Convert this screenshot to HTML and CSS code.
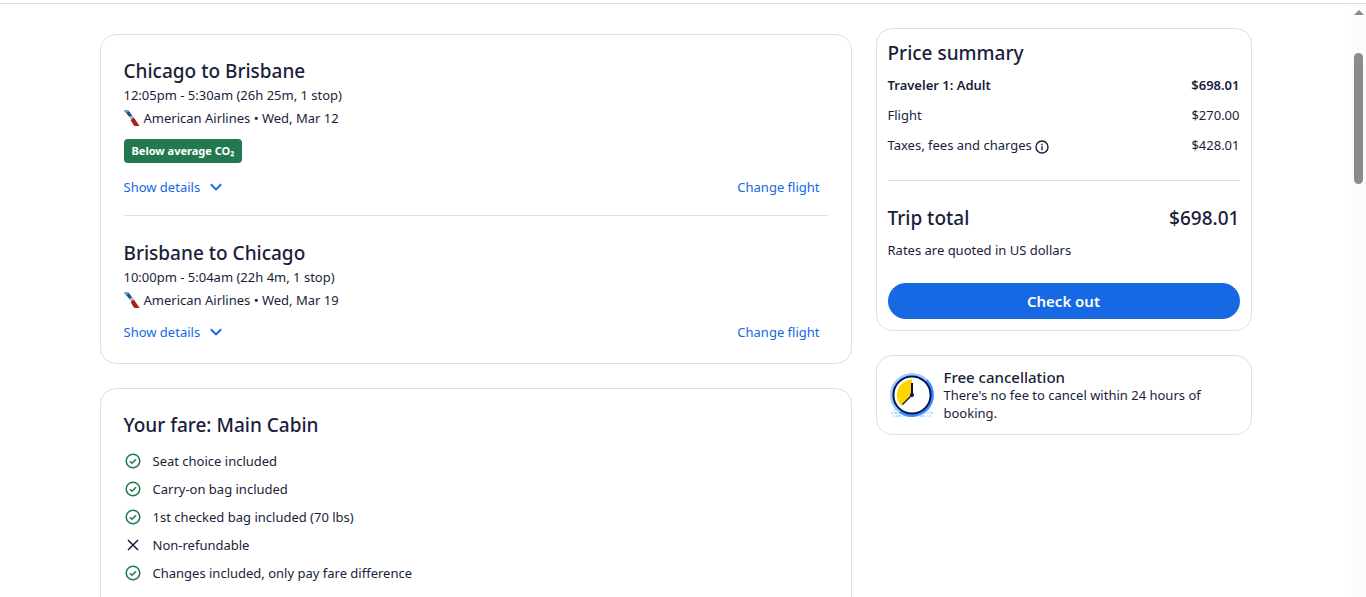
FILE: index.html
```
<!DOCTYPE html>
<html lang="en">
<head>
  <meta charset="UTF-8">
  <meta name="viewport" content="width=device-width, initial-scale=1.0">
  <title>Review your trip</title>
  <link rel="stylesheet" href="styles.css">
</head>
<body>
  <!-- shared icons -->
  <svg class="sprite" aria-hidden="true">
    <symbol id="icon-check" viewBox="0 0 16 16">
      <circle cx="8" cy="8" r="6.8" fill="none" stroke="currentColor" stroke-width="1.5"/>
      <path d="M5 8.2l2 2 4-4" fill="none" stroke="currentColor" stroke-width="1.5"/>
    </symbol>
    <symbol id="icon-close" viewBox="0 0 16 16">
      <path d="M3 3l10 10M13 3L3 13" fill="none" stroke="currentColor" stroke-width="1.5"/>
    </symbol>
    <symbol id="icon-chevron" viewBox="0 0 12 12">
      <path d="M0.8 3.2L6 8.4l5.2-5.2" fill="none" stroke="currentColor" stroke-width="2"/>
    </symbol>
    <symbol id="icon-airline" viewBox="0 0 16 16">
      <path d="M0 0.5h3.6c1 0 1.5.4 2 1.2L9 7 5.8 7.4z" fill="#1f4e8c"/>
      <path d="M0 0.5h3.6c.7 0 1.2.3 1.6.7L2.2 3z" fill="#4fa3d8"/>
      <path d="M5 6.6L9 5.8l1.4 2.4-2.8 2.2z" fill="#b4bcc4"/>
      <path d="M6.8 10.4c.3-1.4 1.4-2.2 3.4-2.4L15.6 16h-4c-1 0-1.6-.4-2.2-1.3z" fill="#a8201f"/>
    </symbol>
  </svg>

  <div class="page">
    <main class="content">
      <div class="trip">
        <section class="card flights">
          <article class="flight">
            <h2>Chicago to Brisbane</h2>
            <p class="times">12:05pm - 5:30am (26h 25m, 1 stop)</p>
            <p class="airline"><svg class="airline-logo"><use href="#icon-airline"/></svg>American Airlines • Wed, Mar 12</p>
            <span class="badge">Below average CO₂</span>
            <div class="actions">
              <button type="button" class="details">Show details <svg><use href="#icon-chevron"/></svg></button>
              <a href="#">Change flight</a>
            </div>
          </article>
          <article class="flight">
            <h2>Brisbane to Chicago</h2>
            <p class="times">10:00pm - 5:04am (22h 4m, 1 stop)</p>
            <p class="airline"><svg class="airline-logo"><use href="#icon-airline"/></svg>American Airlines • Wed, Mar 19</p>
            <div class="actions">
              <button type="button" class="details">Show details <svg><use href="#icon-chevron"/></svg></button>
              <a href="#">Change flight</a>
            </div>
          </article>
        </section>

        <section class="card fare">
          <h2>Your fare: Main Cabin</h2>
          <ul>
            <li><svg><use href="#icon-check"/></svg>Seat choice included</li>
            <li><svg><use href="#icon-check"/></svg>Carry-on bag included</li>
            <li><svg><use href="#icon-check"/></svg>1st checked bag included (70 lbs)</li>
            <li class="excluded"><svg><use href="#icon-close"/></svg>Non-refundable</li>
            <li><svg><use href="#icon-check"/></svg>Changes included, only pay fare difference</li>
          </ul>
        </section>
      </div>

      <aside class="sidebar">
        <section class="card price">
          <h2>Price summary</h2>
          <dl class="lines">
            <div class="strong"><dt>Traveler 1: Adult</dt><dd>$698.01</dd></div>
            <div><dt>Flight</dt><dd>$270.00</dd></div>
            <div>
              <dt>Taxes, fees and charges
                <button type="button" class="info" aria-label="About taxes, fees and charges">
                  <svg viewBox="0 0 14 14">
                    <circle cx="7" cy="7" r="6" fill="none" stroke="currentColor" stroke-width="1.4"/>
                    <path d="M7 6.2v4M7 3.8v1.4" stroke="currentColor" stroke-width="1.4"/>
                  </svg>
                </button>
              </dt>
              <dd>$428.01</dd>
            </div>
          </dl>
          <dl class="total">
            <div><dt>Trip total</dt><dd>$698.01</dd></div>
          </dl>
          <p class="rates">Rates are quoted in US dollars</p>
          <button type="button" class="checkout">Check out</button>
        </section>

        <section class="card cancellation">
          <svg class="clock" viewBox="0 0 44 44" aria-hidden="true">
            <path d="M4 37h36M1 40h42M3 43h38" stroke="#c4e0ff" stroke-width="2" stroke-dasharray="2 1 5 2 1 1"/>
            <circle cx="22" cy="22" r="22" fill="#9fccfb"/>
            <path d="M37.5 6.5A22 22 0 0 1 9 39.8z" fill="#3c8bff"/>
            <circle cx="22" cy="22" r="18.6" fill="#fff" stroke="#00145c" stroke-width="2"/>
            <path d="M22 22V6.6A15.4 15.4 0 0 0 11.6 33.2z" fill="#ffd500"/>
            <path d="M22 22L12.5 31.5" stroke="#00145c" stroke-width="1.2"/>
            <path d="M22 22V10" stroke="#00145c" stroke-width="2"/>
            <circle cx="22" cy="22" r="2" fill="#00145c"/>
          </svg>
          <div>
            <h3>Free cancellation</h3>
            <p>There's no fee to cancel within 24 hours of booking.</p>
          </div>
        </section>
      </aside>
    </main>

    <div class="scrollbar" aria-hidden="true">
      <span class="arrow"></span>
      <span class="thumb"></span>
    </div>
  </div>
</body>
</html>
```
FILE: styles.css
```
* {
  box-sizing: border-box;
}
html, body {
  height: 100%;
  margin: 0;
}
body {
  padding-top: 3px;
  overflow: hidden;
  background: #fff;
  color: #191e3b;
  font-family: "Segoe UI", "Noto Sans", "Open Sans", sans-serif;
  font-size: 13px;
  line-height: 20px;
}
h2, h3, p, ul, dl, dd {
  margin: 0;
  padding: 0;
}
h2 {
  font-size: 19px;
  line-height: 24px;
  font-weight: 500;
}
button {
  font: inherit;
  border: 0;
  padding: 0;
  background: none;
  cursor: pointer;
}
a, .details {
  color: #1668e3;
  text-decoration: none;
}
a:hover {
  text-decoration: underline;
}
.sprite {
  display: none;
}

/* page frame */
.page {
  display: flex;
  height: 100%;
  border-top: 1px solid #dfe0e4;
}
.content {
  flex: 1;
  display: grid;
  grid-template-columns: minmax(0, 2fr) minmax(0, 1fr);
  gap: 24px;
  align-items: start;
  max-width: 1152px;
  margin: 0 auto;
}
.trip {
  padding-top: 30px;
}
.sidebar {
  padding-top: 24px;
}
.card {
  border: 1px solid #dfe0e4;
  border-radius: 16px;
  padding: 24px 23px;
  margin-bottom: 24px;
}

/* flights */
.flights {
  padding-bottom: 19px;
}
.flight:first-child {
  padding-bottom: 16px;
  border-bottom: 1px solid #dfe0e4;
}
.flight:last-child {
  padding-top: 25px;
}
.times {
  margin-top: 2px;
}
.airline {
  display: flex;
  align-items: center;
  gap: 4px;
  margin-top: 3px;
}
.airline-logo {
  width: 16px;
  height: 16px;
}
.badge {
  display: block;
  width: fit-content;
  margin: 11px 0 12px;
  padding: 0 8px;
  border-radius: 4px;
  background: #227950;
  color: #fff;
  font-size: 11px;
  line-height: 24px;
  font-weight: 700;
}
.actions {
  display: flex;
  justify-content: space-between;
  align-items: center;
  height: 24px;
  margin-top: 10px;
  padding-right: 8px;
}
.details {
  display: flex;
  align-items: center;
  gap: 10px;
}
.details svg {
  width: 12px;
  height: 12px;
}

/* fare */
.fare {
  padding-bottom: 60px;
}
.fare ul {
  display: grid;
  gap: 4px;
  margin-top: 12px;
  list-style: none;
}
.fare li {
  display: flex;
  align-items: center;
  gap: 12px;
  line-height: 24px;
}
.fare svg {
  width: 16px;
  height: 16px;
  margin-left: 1px;
  color: #227950;
}
.fare .excluded svg {
  color: #191e3b;
}

/* price summary */
.price {
  padding: 12px 11px 11px;
}
.lines {
  display: grid;
  gap: 10px;
  margin-top: 10px;
  padding-bottom: 25px;
  border-bottom: 1px solid #dfe0e4;
}
.lines div, .total div {
  display: flex;
  justify-content: space-between;
}
.lines .strong {
  font-weight: 600;
}
.info {
  display: inline-flex;
  vertical-align: middle;
  color: inherit;
}
.info svg {
  width: 14px;
  height: 14px;
}
.total {
  margin: 25px 0 10px;
  font-size: 19px;
  line-height: 24px;
  font-weight: 500;
}
.checkout {
  width: 100%;
  height: 36px;
  margin-top: 23px;
  border-radius: 18px;
  background: #1668e3;
  color: #fff;
  font-size: 15px;
  font-weight: 600;
}
.checkout:hover {
  background: #1158c4;
}

/* free cancellation */
.cancellation {
  display: flex;
  align-items: center;
  gap: 10px;
  padding: 12px 13px;
}
.clock {
  flex: none;
  width: 44px;
  height: 44px;
}
.cancellation h3 {
  font-size: 15px;
  line-height: 18px;
  font-weight: 500;
}
.cancellation p {
  line-height: 18px;
}

/* scroll track on the right edge */
.scrollbar {
  display: flex;
  flex-direction: column;
  align-items: center;
  width: 15px;
  padding-top: 6px;
  background: #fcfcfc;
}
.arrow {
  border: 5px solid transparent;
  border-top: 0;
  border-bottom: 5px solid #8b8b8b;
}
.thumb {
  width: 9px;
  height: 131px;
  margin-top: 38px;
  border-radius: 5px;
  background: #8b8b8b;
}
```
